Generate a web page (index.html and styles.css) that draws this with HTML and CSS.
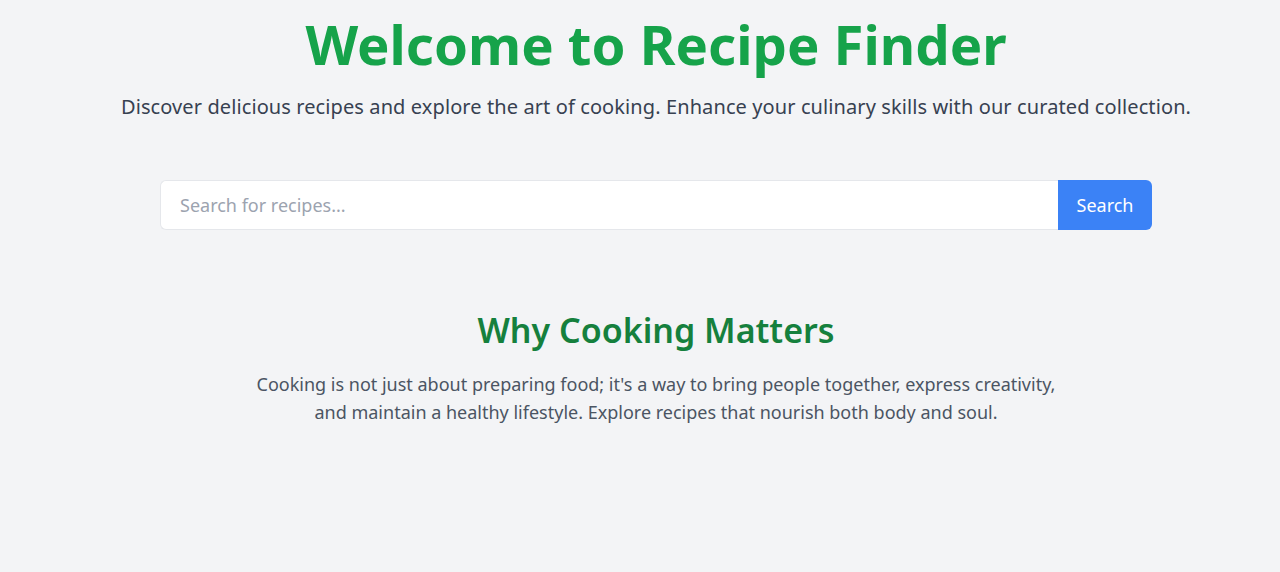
FILE: index.html
```html
<!DOCTYPE html>
<html lang="en">
<head>
<meta charset="utf-8">
<title>Recipe Finder</title>
<link rel="stylesheet" href="styles.css">
</head>
<body>
<main class="page">
  <header class="hero">
    <h1 class="hero-title">Welcome to Recipe Finder</h1>
    <p class="hero-sub">Discover delicious recipes and explore the art of cooking. Enhance your culinary skills with our curated collection.</p>
  </header>
  <form class="search" onsubmit="return false">
    <input class="search-input" type="text" placeholder="Search for recipes...">
    <button class="search-btn" type="submit">Search</button>
  </form>
  <section class="why">
    <h2 class="why-title">Why Cooking Matters</h2>
    <p class="why-text">Cooking is not just about preparing food; it's a way to bring people together, express creativity, and maintain a healthy lifestyle. Explore recipes that nourish both body and soul.</p>
  </section>
</main>
</body>
</html>
```

FILE: styles.css
```css
* { box-sizing: border-box; }
html, body { margin: 0; padding: 0; }
body {
  background: #f3f4f6;
  font-family: "Noto Sans", "Open Sans", sans-serif;
  height: 572px;
  overflow: hidden;
}
.page {
  display: flex;
  flex-direction: column;
  align-items: center;
  padding: 10px 0 0 32px;
}
.hero { text-align: center; }
.hero-title {
  margin: 0;
  font-size: 54.5px;
  line-height: 68px;
  font-weight: 700;
  color: #16a34a;
}
.hero-sub {
  margin: 15px 0 0;
  font-size: 20px;
  line-height: 28px;
  letter-spacing: 0.1px;
  color: #374151;
}
.search {
  display: flex;
  width: 992px;
  height: 50px;
  margin-top: 59px;
}
.search-input {
  flex: 1;
  height: 100%;
  border: 1px solid #e5e7eb;
  border-right: none;
  border-radius: 6px 0 0 6px;
  background: #fff;
  padding: 0 19px;
  font-family: inherit;
  font-size: 18px;
  color: #374151;
  outline: none;
}
.search-input::placeholder { color: #9ca3af; }
.search-btn {
  width: 94px;
  height: 100%;
  border: none;
  border-radius: 0 6px 6px 0;
  background: #3b82f6;
  color: #fff;
  font-family: inherit;
  font-size: 18px;
}
.why {
  margin-top: 76px;
  text-align: center;
}
.why-title {
  margin: 0;
  font-size: 34px;
  line-height: 48px;
  font-weight: 600;
  color: #15803d;
}
.why-text {
  margin: 16px auto 0;
  max-width: 820px;
  font-size: 18px;
  line-height: 28px;
  color: #4b5563;
}
```
